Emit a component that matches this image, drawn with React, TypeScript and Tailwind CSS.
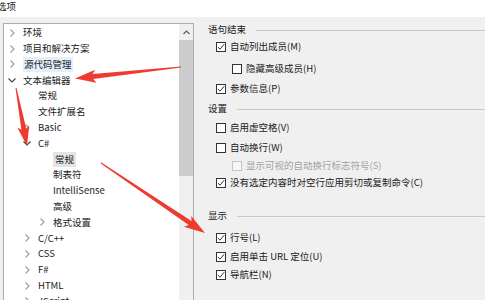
import React from 'react';

type Pt = [number, number];

// tapered red annotation arrow, tail -> tip
const arrowPoints = (t: Pt, p: Pt, len = 18, half = 6.5, w0 = 0.5, w1 = 2.5) => {
    const dx = p[0] - t[0];
    const dy = p[1] - t[1];
    const d = Math.hypot(dx, dy);
    const ux = dx / d, uy = dy / d;
    const nx = -uy, ny = ux;
    const bx = p[0] - ux * len, by = p[1] - uy * len;
    const wx = bx - ux * 3, wy = by - uy * 3;
    const pts: Pt[] = [
        [t[0] + nx * w0, t[1] + ny * w0],
        [bx + nx * w1, by + ny * w1],
        [wx + nx * half, wy + ny * half],
        p,
        [wx - nx * half, wy - ny * half],
        [bx - nx * w1, by - ny * w1],
        [t[0] - nx * w0, t[1] - ny * w0],
    ];
    return pts.map(([x, y]) => `${x.toFixed(1)},${y.toFixed(1)}`).join(' ');
};

const Chevron = ({ open }: { open?: boolean }) =>
    open ? (
        <svg width="8" height="5" viewBox="0 0 8 5">
            <polyline points="0.5,0.5 4,4 7.5,0.5" fill="none" stroke="#444" strokeWidth="1.1" />
        </svg>
    ) : (
        <svg width="5" height="8" viewBox="0 0 5 8">
            <polyline points="0.5,0.5 4,4 0.5,7.5" fill="none" stroke="#9a9a9a" strokeWidth="1.1" />
        </svg>
    );

interface Node {
    label: string;
    level: number;
    chevron?: 'open' | 'closed';
    hl?: 'blue' | 'gray';
}

const tree: Node[] = [
    { label: '环境', level: 0, chevron: 'closed' },
    { label: '项目和解决方案', level: 0, chevron: 'closed' },
    { label: '源代码管理', level: 0, chevron: 'closed', hl: 'blue' },
    { label: '文本编辑器', level: 0, chevron: 'open' },
    { label: '常规', level: 1 },
    { label: '文件扩展名', level: 1 },
    { label: 'Basic', level: 1, chevron: 'closed' },
    { label: 'C#', level: 1, chevron: 'open' },
    { label: '常规', level: 2, hl: 'gray' },
    { label: '制表符', level: 2 },
    { label: 'IntelliSense', level: 2 },
    { label: '高级', level: 2 },
    { label: '格式设置', level: 2, chevron: 'closed' },
    { label: 'C/C++', level: 1, chevron: 'closed' },
    { label: 'CSS', level: 1, chevron: 'closed' },
    { label: 'F#', level: 1, chevron: 'closed' },
    { label: 'HTML', level: 1, chevron: 'closed' },
    { label: 'JScript', level: 1, chevron: 'closed' },
];

const indent = ['pl-[1px]', 'pl-[16px]', 'pl-[31px]'];

const Check = ({ checked, disabled }: { checked?: boolean; disabled?: boolean }) => (
    <span
        className={`w-[10px] h-[10px] flex items-center justify-center border ${
            disabled ? 'border-[#c4c4c4] bg-[#f7f7f7]' : 'border-[#333] bg-white'
        }`}
    >
        {checked && (
            <svg width="8" height="8" viewBox="0 0 8 8">
                <polyline points="0.8,4 3,6.2 7.2,1.2" fill="none" stroke="#333" strokeWidth="1" />
            </svg>
        )}
    </span>
);

const Option = ({ label, checked, disabled, sub, mt }: { label: string; checked?: boolean; disabled?: boolean; sub?: boolean; mt: string }) => (
    <div className={`h-[16px] flex items-center gap-[4px] ${sub ? 'pl-[24px]' : 'pl-[8px]'} ${mt} ${disabled ? 'text-[#a2a2a2]' : 'text-[#1a1a1a]'}`}>
        <Check checked={checked} disabled={disabled} />
        <span>{label}</span>
    </div>
);

const Heading = ({ label, mt }: { label: string; mt: string }) => (
    <div className={`h-[16px] flex items-center gap-[10px] text-[#1a1a1a] ${mt}`}>
        <span>{label}</span>
        <div className="flex-1 h-px bg-[#c9c9c9]" />
    </div>
);

export default function App() {
    return (
        <div
            className="relative w-[485px] h-[300px] overflow-hidden bg-[#f0f0f0] text-[9.5px] leading-none"
            style={{ fontFamily: '"Noto Sans CJK SC", "Noto Sans", sans-serif' }}
        >
            <div className="h-[17px] bg-white flex items-center -ml-[3px] pb-[4px] text-[#1a1a1a]">选项</div>

            <div className="flex">
                {/* tree panel */}
                <div className="ml-[3px] mt-[6px] w-[191px] h-[300px] border border-[#adadad] bg-white flex">
                    <div className="w-[175px] pt-[1px]">
                        {tree.map((n, i) => (
                            <div key={i} className={`h-[15.8px] flex items-center ${indent[n.level]} text-[#1a1a1a]`}>
                                <span className="w-[14px] flex items-center justify-center">
                                    {n.chevron && <Chevron open={n.chevron === 'open'} />}
                                </span>
                                <span
                                    className={`ml-[4px] ${
                                        n.hl === 'blue'
                                            ? '-ml-[-3px] px-[1px] py-[3px] bg-[#e3f0fb]'
                                            : n.hl === 'gray'
                                            ? 'ml-[2px] px-[2px] py-[3px] bg-[#e4e4e4]'
                                            : ''
                                    }`}
                                >
                                    {n.label}
                                </span>
                            </div>
                        ))}
                    </div>
                    <div className="w-[14px] bg-[#f0f0f0] flex flex-col">
                        <div className="h-[16px] flex items-center justify-center">
                            <svg width="7" height="5" viewBox="0 0 7 5">
                                <polyline points="0.5,4 3.5,1 6.5,4" fill="none" stroke="#606060" strokeWidth="1.2" />
                            </svg>
                        </div>
                        <div className="h-[136px] bg-[#cdcdcd]" />
                    </div>
                </div>

                {/* options panel */}
                <div className="flex-1 ml-[14px] mt-[5px]">
                    <Heading label="语句结束" mt="mt-0" />
                    <Option label="自动列出成员(M)" checked mt="mt-[1px]" />
                    <Option label="隐藏高级成员(H)" sub mt="mt-[6px]" />
                    <Option label="参数信息(P)" checked mt="mt-[4px]" />
                    <Heading label="设置" mt="mt-[4px]" />
                    <Option label="启用虚空格(V)" mt="mt-[3px]" />
                    <Option label="自动换行(W)" mt="mt-[4px]" />
                    <Option label="显示可视的自动换行标志符号(S)" sub disabled mt="mt-[2px]" />
                    <Option label="没有选定内容时对空行应用剪切或复制命令(C)" checked mt="mt-[1px]" />
                    <Heading label="显示" mt="mt-[17px]" />
                    <Option label="行号(L)" checked mt="mt-[6px]" />
                    <Option label="启用单击 URL 定位(U)" checked mt="mt-[3px]" />
                    <Option label="导航栏(N)" checked mt="mt-[2px]" />
                </div>
            </div>

            <svg className="absolute inset-0 pointer-events-none" width="485" height="300">
                <polygon points={arrowPoints([181, 67], [75, 78.5])} fill="#ee3b30" />
                <polygon points={arrowPoints([16, 88], [27, 146], 17, 6)} fill="#ee3b30" />
                <polygon points={arrowPoints([101, 163], [205, 233])} fill="#ee3b30" />
            </svg>
        </div>
    );
}
